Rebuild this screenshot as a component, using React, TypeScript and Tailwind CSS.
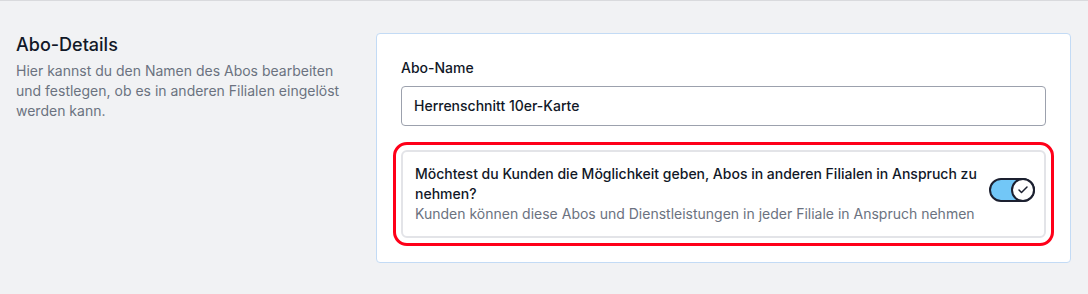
import { Check } from "lucide-react";

export default function App() {
  return (
    <div
      className="min-h-[294px] border-t border-[#d9dadd] bg-[#f1f2f4] text-[#111827]"
      style={{ fontFamily: "Inter, 'Noto Sans', sans-serif" }}
    >
      <div className="flex gap-4 pt-8 pl-4 pr-[17px] pb-8">
        {/* Left: section intro */}
        <div className="w-[344px] shrink-0">
          <h2 className="text-lg leading-6 font-medium">Abo-Details</h2>
          <p className="mt-1 text-sm leading-5 text-[#6b7280]">
            Hier kannst du den Namen des Abos bearbeiten und festlegen, ob es in anderen Filialen eingelöst werden kann.
          </p>
        </div>

        {/* Right: card */}
        <div className="flex-1 rounded border border-[#c3dbf5] bg-white p-6">
          <label className="block text-sm leading-5 font-medium">Abo-Name</label>
          <div className="mt-2 flex h-10 items-center rounded border border-[#9ca1ad] px-3 text-sm font-medium">
            Herrenschnitt 10er-Karte
          </div>

          <div className="mt-6 flex items-center gap-2 rounded-md border-2 border-[#e3e4e8] py-3 pl-3 pr-[9px] outline-[3px] outline-offset-[5px] outline-[#ff0019] outline-solid">
            <div className="flex-1 text-sm leading-5">
              <p className="font-medium">
                Möchtest du Kunden die Möglichkeit geben, Abos in anderen Filialen in Anspruch zu nehmen?
              </p>
              <p className="text-[#6b7280]">
                Kunden können diese Abos und Dienstleistungen in jeder Filiale in Anspruch nehmen
              </p>
            </div>
            <button
              type="button"
              className="mb-2 flex h-6 w-[46px] shrink-0 items-center justify-end rounded-full border-2 border-[#1c2030] bg-[#72c7f7]"
            >
              <span className="-mr-[2px] flex h-6 w-6 items-center justify-center rounded-full border-2 border-[#1c2030] bg-white">
                <Check className="h-3 w-3 text-[#1c2030]" strokeWidth={3} />
              </span>
            </button>
          </div>
        </div>
      </div>
    </div>
  );
}
